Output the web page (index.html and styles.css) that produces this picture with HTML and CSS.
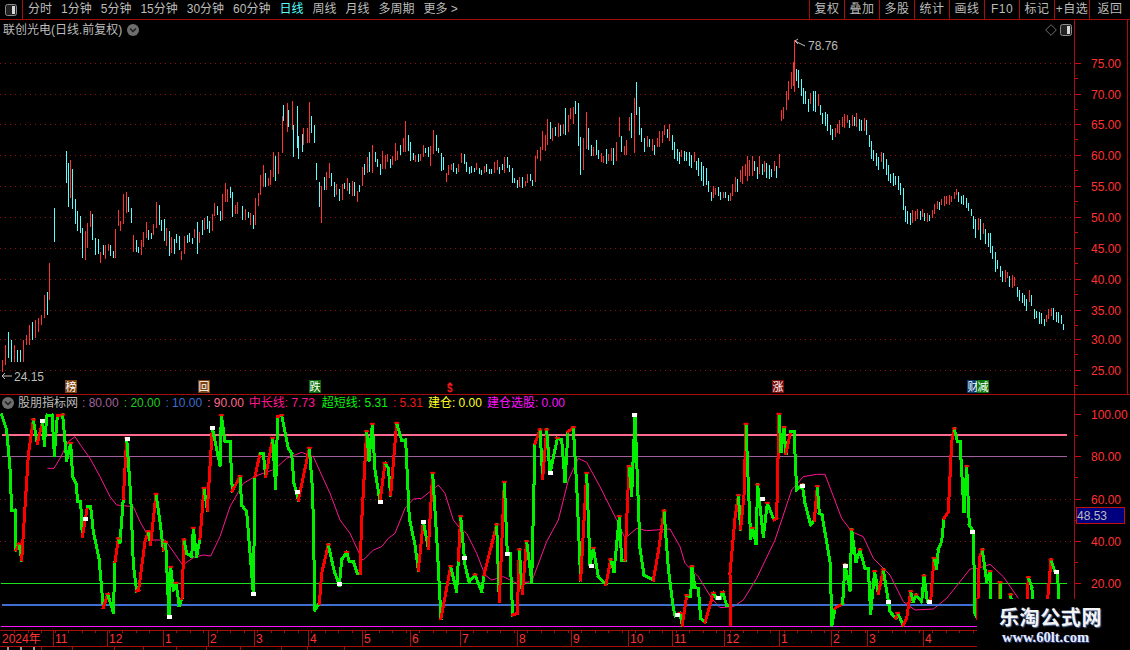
FILE: index.html
```html
<!DOCTYPE html>
<html lang="zh-CN">
<head>
  <meta charset="UTF-8" />
  <title>联创光电</title>
  <link rel="stylesheet" href="styles.css">
</head>
<body>
  <div class="screen">
    <div class="toolbar">
      <div class="layout-btn">
        <svg class="layout-icon" width="12" height="12" viewBox="0 0 12 12"><rect x="0.5" y="0.5" width="11" height="11" rx="2" fill="#222" stroke="#8c8c8c"/><rect x="7" y="2" width="3" height="8" fill="#d8d8d8"/></svg>
      </div>
      <div class="periods">
        <span>分时</span><span>1分钟</span><span>5分钟</span><span>15分钟</span><span>30分钟</span><span>60分钟</span>
        <span class="active">日线</span><span>周线</span><span>月线</span><span>多周期</span><span>更多 &gt;</span>
      </div>
      <div class="tools">
        <span>复权</span><span>叠加</span><span>多股</span><span>统计</span><span>画线</span><span>F10</span><span>标记</span><span>+自选</span><span class="last">返回</span>
      </div>
    </div>

    <div class="pane pane-main">
      <div class="plot">
        <svg id="priceChart" width="1075" height="374" viewBox="0 20 1075 374"></svg>
        <div class="title">
          <span>联创光电(日线.前复权)</span>
          <svg width="12" height="12" viewBox="0 0 12 12"><circle cx="6" cy="6" r="6" fill="#6e6e6e"/><path d="M3 4.5 L6 7.5 L9 4.5" fill="none" stroke="#1c1c1c" stroke-width="1.5"/></svg>
        </div>
        <div class="plot-icons">
          <svg width="12" height="12" viewBox="0 0 12 12"><path d="M6 .7 L11.3 6 L6 11.3 L.7 6 Z" fill="none" stroke="#6e6e6e"/></svg>
          <svg width="12" height="12" viewBox="0 0 12 12"><rect x="0.5" y="0.5" width="11" height="11" rx="2" fill="#222" stroke="#8c8c8c"/><rect x="7" y="2" width="3" height="8" fill="#d8d8d8"/></svg>
        </div>
      </div>
      <svg id="priceAxis" class="axis" width="52" height="374" viewBox="1075 20 52 374"></svg>
      <div class="side-strip"></div>
    </div>

    <div class="pane pane-sub">
      <div class="plot">
        <svg id="indicatorChart" width="1075" height="235" viewBox="0 395 1075 235"></svg>
        <div class="legend">
          <svg width="12" height="12" viewBox="0 0 12 12"><circle cx="6" cy="6" r="6" fill="#6e6e6e"/><path d="M3 4.5 L6 7.5 L9 4.5" fill="none" stroke="#1c1c1c" stroke-width="1.5"/></svg>
          <span class="legend-name">股朋指标网</span>
          <span class="c-purple">: 80.00</span>
          <span class="c-green">: 20.00</span>
          <span class="c-blue">: 10.00</span>
          <span class="c-pink">: 90.00</span>
          <span class="c-rose">中长线: 7.73</span>
          <span class="c-lime">超短线: 5.31</span>
          <span class="c-red">: 5.31</span>
          <span class="c-yellow">建仓: 0.00</span>
          <span class="c-magenta">建仓选股: 0.00</span>
        </div>
      </div>
      <svg id="indicatorAxis" class="axis" width="55" height="235" viewBox="1075 395 55 235"></svg>
    </div>

    <div class="timeline">
      <svg id="timeAxis" width="978" height="15" viewBox="0 631 978 15"></svg>
    </div>

    <div class="tabs">
      <i class="tab t42"></i><i class="tab t31"></i><i class="tab t42"></i><i class="tab t29"></i><i class="tab t33"></i><i class="tab t30"></i><i class="tab t34"></i><i class="tab t41"></i><i class="tab t26"></i><i class="tab t37"></i>
    </div>

    <div class="watermark">
      <div class="wm-name">乐淘公式网</div>
      <div class="wm-url">www.60lt.com</div>
    </div>
  </div>
  <script src="chart.js"></script>
</body>
</html>
```

FILE: styles.css
```css
html, body { margin: 0; padding: 0; background: #000; }
body { font-family: "Liberation Sans", "Noto Sans CJK SC", sans-serif; font-size: 12px; color: #bcbcbc; }
svg { display: block; }
.screen { position: relative; width: 1130px; height: 650px; overflow: hidden; display: flex; flex-direction: column; }

.toolbar { display: flex; height: 19px; border-bottom: 1px solid #a80d0d; line-height: 18px; white-space: nowrap; }
.layout-btn { width: 23px; border-right: 1px solid #a80d0d; display: flex; align-items: center; padding-left: 5px; box-sizing: border-box; }
.periods { display: flex; gap: 9px; padding-left: 5px; flex: 1; }
.periods .active { color: #54ffff; }
.tools { display: flex; }
.tools span { width: 34px; border-left: 1px solid #a80d0d; text-align: center; letter-spacing: 0.5px; }
.tools .last { width: 40px; }

.pane { display: flex; border-bottom: 1px solid #a80d0d; }
.pane-main { height: 374px; }
.pane-sub { height: 235px; }
.plot { position: relative; width: 1075px; flex: none; }
.axis { border-left: 1px solid #a80d0d; margin-left: -1px; flex: none; }
.side-strip { flex: none; width: 3px; border-left: 1px solid #a80d0d; }

.title { position: absolute; left: 3px; top: 1px; display: flex; align-items: center; gap: 5px; line-height: 18px; }
.plot-icons { position: absolute; right: 3px; top: 4px; display: flex; gap: 3px; }
.legend { position: absolute; left: 2px; top: 0; display: flex; align-items: center; line-height: 16px; white-space: nowrap; }
.legend span { margin-right: 5px; }
.legend svg { margin-right: 4px; }
.legend .legend-name { margin-right: 4px; }
.legend .c-rose { margin-right: 7px; }

.c-purple { color: #a0609c; }
.c-green { color: #20cc20; }
.c-blue { color: #3f6fd0; }
.c-pink { color: #ff6b8f; }
.c-rose { color: #ff1493; }
.c-lime { color: #10f010; }
.c-red { color: #f01818; }
.c-yellow { color: #ffff20; }
.c-magenta { color: #ff10ff; }

.timeline { height: 15px; border-bottom: 1px solid #a80d0d; }
#timeAxis { overflow: visible; }
.tabs { display: flex; height: 3px; overflow: hidden; }
.tab { display: block; border-right: 1px solid #a80d0d; box-sizing: border-box; }
.tab:first-child { background: repeating-linear-gradient(90deg, #000 0 7px, #9a9a9a 7px 9px, #000 9px 13px); }
.t26 { width: 26px; }
.t29 { width: 29px; }
.t30 { width: 30px; }
.t31 { width: 31px; }
.t33 { width: 33px; }
.t34 { width: 34px; }
.t37 { width: 37px; }
.t41 { width: 41px; }
.t42 { width: 42px; }

.watermark { position: absolute; left: 977px; top: 599px; width: 153px; height: 51px; background: #000; box-sizing: border-box; padding: 6px 0 0 22px; }
.wm-name { font-family: "Noto Sans CJK SC", sans-serif; font-size: 20px; font-weight: 700; line-height: 24px; letter-spacing: 0.6px; color: #f4f4f4; text-shadow: 1px 1px 1px #5a70a0; white-space: nowrap; }
.wm-url { font-family: "Liberation Serif", serif; font-size: 14.5px; font-weight: 700; line-height: 16px; margin-left: 3px; color: #e6ecff; text-shadow: 1px 1px 1px #3a4c90; white-space: nowrap; }

.axis-text { font-family: "Liberation Sans", "Noto Sans CJK SC", sans-serif; font-size: 12px; fill: #ff3232; }
.price-text { font-family: "Liberation Sans", sans-serif; font-size: 12px; fill: #bcbcbc; }
.tag-text { font-family: "Noto Sans CJK SC", sans-serif; font-size: 11px; fill: #fff; }
.dollar-text { font-family: "Liberation Sans", sans-serif; font-size: 10px; font-weight: 700; fill: #f01818; }
```

FILE: chart.js
```js
var NS = "http://www.w3.org/2000/svg";

function add(svg, name, attrs, text) {
  var node = document.createElementNS(NS, name);
  for (var key in attrs) node.setAttribute(key, attrs[key]);
  if (text) node.textContent = text;
  svg.appendChild(node);
  return node;
}

function hline(svg, x1, x2, y, color, width, dash) {
  var attrs = { x1: x1, x2: x2, y1: y, y2: y, stroke: color, "stroke-width": width || 1, "shape-rendering": "crispEdges" };
  if (dash) attrs["stroke-dasharray"] = dash;
  add(svg, "line", attrs);
}

function vline(svg, x, y1, y2, color, width) {
  add(svg, "line", { x1: x, x2: x, y1: y1, y2: y2, stroke: color, "stroke-width": width || 1, "shape-rendering": "crispEdges" });
}

// bars read off the reference, as "x,top,bottom,colour" relative to a 3x crop
var BARS_LEFT = "163,324,426,c 197,153,249,c 203,190,321,c 211,180,294,r 217,207,327,c 226,297,372,c 232,333,393,c 241,348,399,c 247,384,474,c 256,393,480,r 262,369,444,r 271,333,381,r 277,342,420,c 286,414,465,c 295,417,462,c 301,456,489,r 310,435,465,c 316,435,477,r 325,432,453,r 331,435,468,c 340,453,474,c 346,387,474,r 355,330,378,r 361,363,393,r 370,282,372,r 379,276,339,r 385,291,336,c 394,324,369,c 400,405,456,r 409,420,456,c 415,441,459,c 424,420,465,r 430,396,441,r 439,366,414,r 445,390,420,c 454,399,417,c 460,372,405,r 469,306,384,r 478,315,375,c 484,360,393,c 493,357,423,c 499,384,438,r 508,393,468,c 514,411,459,r 523,417,462,c 529,402,429,c 538,408,450,c 544,453,480,r 553,408,462,r 562,405,429,c 568,399,426,c 577,414,432,c 583,387,414,r 592,366,462,c 598,396,429,r 607,360,405,c 613,354,390,r 622,348,387,c 628,363,399,c 637,342,393,r 643,309,348,r 652,318,345,c 661,333,363,c 667,282,360,r 676,249,306,r 682,267,306,r 691,261,294,c 697,276,351,c 706,315,342,r 712,306,342,r";

var BARS_MIDDLE = "5,408,450,c 15,417,450,r 25,426,444,c 30,429,465,r 40,435,477,c 45,384,465,r 55,369,408,r 60,315,375,r 70,285,352,r 75,309,352,c 85,324,348,r 90,300,345,r 100,246,321,r 105,258,333,c 115,246,312,r 125,138,249,r 130,105,153,c 140,99,186,r 145,120,171,c 155,93,180,r 160,165,261,c 170,108,234,c 175,198,267,c 185,192,246,c 190,174,225,r 200,174,219,r 208,96,219,r 214,138,189,c 223,165,219,c 229,279,330,c 238,336,411,c 244,348,459,r 253,321,360,c 259,306,360,r 268,279,324,r 274,309,348,c 283,336,381,c 289,342,375,r 298,357,393,c 307,342,390,r 313,339,357,c 322,324,363,r 328,339,372,c 337,333,378,r 343,336,378,c 352,363,396,r 358,345,366,c 367,292,348,r 373,282,315,c 382,262,310,r 388,246,305,c 397,225,308,r 406,246,275,c 412,268,290,c 421,282,315,c 427,243,297,r 436,255,297,r 442,252,275,r 451,267,293,c 457,258,285,r 466,218,272,r 472,243,270,r 481,225,255,c 490,204,245,r 496,153,245,r 505,195,243,c 511,216,272,c 520,250,270,c 526,255,275,r 535,252,275,c 541,252,273,r 550,225,260,r 556,233,250,c 565,230,260,c 571,228,288,r 580,180,252,r 589,195,243,c 595,233,248,c 604,250,302,c 610,262,300,c 619,310,335,r 625,285,315,r 634,282,300,r 640,280,305,c 649,293,312,c 655,282,305,r 664,250,278,r 673,252,283,c 679,277,305,c 688,290,312,c 694,288,308,c 703,295,305,c 709,280,300,r 718,295,313,c 724,300,315,c 733,288,310,r 739,283,305,c 748,297,312,c 754,297,312,c 763,277,310,r 772,270,300,r 778,292,312,c 787,282,300,c 793,262,308,r 802,262,295,c 808,285,305,c 817,294,340,c 823,325,340,c 832,330,355,c 838,322,350,r 847,322,353,c 856,332,348,r 862,312,340,r 871,312,332,c 877,330,347,c 886,258,335,r 892,240,268,r 901,232,272,r 907,183,240,r 916,195,243,r 922,148,225,r 931,155,207,c 937,175,212,r 946,170,198,c 955,160,200,r 961,165,197,c 970,162,192,r 976,114,195,c 985,135,185,r 991,114,147,r 1000,110,162,r 1006,93,133,c 1015,98,228,c 1021,200,315,c 1030,205,300,r 1039,126,238,r 1045,175,240,c 1054,225,258,c 1060,232,258,r 1069,210,255,c 1075,240,268,c 1084,250,275,r 1090,258,278,r 1099,237,282,c 1105,252,273,r 1114,235,273,r 1120,235,285,c 1129,215,273,r 1138,142,200,r 1144,198,245,c 1153,228,255,r 1159,210,255,r 1168,140,183,r 1174,128,205,c 1183,83,248,r 1189,37,135,c 1198,110,195,c 1204,175,215,c 1213,205,245,c 1222,198,230,r 1228,208,230,c 1237,208,243,r 1243,225,255,c 1252,205,230,r 1258,183,230,r";

// start of the run and the right half are only known as envelopes: x, top, bottom
var START = [[2,360,372,"r"],[5,345,365,"r"],[8,332,358,"c"],[11,340,362,"c"],[14,345,362,"r"],[17,350,362,"c"],[20,350,362,"c"],[23,340,362,"r"],[26,335,345,"r"],[29,325,345,"r"],[32,322,340,"c"],[35,320,338,"r"],[38,318,332,"r"],[41,315,325,"r"],[44,295,318,"r"],[47,292,315,"c"],[49,263,300,"r"]];

var ENVELOPE = [[660,125,150],[665,118,135],[670,125,150],[675,140,165],[680,150,165],[685,150,165],[690,152,175],[695,152,170],[700,155,185],[705,165,190],[710,185,205],[715,185,200],[720,187,200],[725,190,200],[730,192,205],[735,175,195],[740,165,190],[745,160,185],[748,140,180],[752,155,180],[758,155,180],[763,158,180],[770,160,180],[778,160,180],[781,110,125],[784,95,120],[787,85,115],[790,75,100],[793,62,95],[796,65,90],[799,70,95],[802,85,105],[806,85,110],[810,90,115],[815,85,115],[820,100,120],[825,105,130],[830,120,142],[835,125,140],[840,115,135],[845,110,130],[850,112,128],[855,110,130],[860,112,132],[865,118,135],[870,125,160],[875,150,170],[880,150,170],[885,155,175],[890,165,185],[895,170,190],[900,180,200],[905,190,225],[908,205,230],[912,205,225],[916,208,222],[920,208,222],[925,210,222],[930,212,222],[935,200,215],[940,195,210],[945,192,205],[950,190,205],[955,187,200],[960,187,205],[965,192,210],[970,200,215],[975,215,240],[980,218,245],[985,225,245],[990,230,255],[995,250,275],[1000,262,280],[1005,270,285],[1010,272,288],[1015,275,292],[1020,290,305],[1025,290,318],[1030,290,310],[1035,305,322],[1040,310,328],[1045,315,328],[1050,305,320],[1055,305,322],[1060,312,328],[1064,325,332]];

var COLORS = { r: "#ff3232", c: "#54ffff" };

function cropBars(str, ox, oy) {
  return str.split(" ").map(function(item) {
    var p = item.split(",");
    return [ox + p[0] / 3, oy + p[1] / 3, oy + p[2] / 3, p[3]];
  });
}

function envelopeBars() {
  var bars = [], seed = 17, i = 0, lastMid = 140;
  function rand() {
    seed = (seed * 137 + 71) % 1009;
    return seed / 1009;
  }
  for (var x = 662; x < 1065; x += 2.43) {
    while (ENVELOPE[i + 1][0] < x) i++;
    var a = ENVELOPE[i], b = ENVELOPE[i + 1];
    var t = (x - a[0]) / (b[0] - a[0]);
    var top = a[1] + (b[1] - a[1]) * t;
    var span = a[2] + (b[2] - a[2]) * t - top;
    var h = span * (0.4 + 0.4 * rand());
    var y = top + (span - h) * rand();
    var mid = y + h / 2;
    bars.push([x, y, y + h, mid < lastMid ? "r" : "c"]);
    lastMid = mid;
  }
  return bars;
}

function drawPrice() {
  var svg = document.getElementById("priceChart");
  var axis = document.getElementById("priceAxis");
  var levels = [[75,63],[70,94],[65,124],[60,155],[55,186],[50,217],[45,248],[40,279],[35,310],[30,339],[25,370]];
  levels.forEach(function(l) {
    hline(svg, 0, 1075, l[1], "#8c1212", 1, "1 4");
    hline(axis, 1075, 1081, l[1], "#c01010");
    hline(axis, 1075, 1078, l[1] + 15, "#c01010");
    add(axis, "text", { x: 1091, y: l[1] + 5, "class": "axis-text" }, l[0] + ".00");
  });

  var bars = START.concat(cropBars(BARS_LEFT, 0, 100), cropBars(BARS_MIDDLE, 240, 70), envelopeBars());
  bars.forEach(function(b) {
    vline(svg, Math.round(b[0]) + 0.5, b[1], b[2], COLORS[b[3]]);
  });
  vline(svg, 794.5, 40, 92, "#ff3232");

  // high and low marks
  add(svg, "path", { d: "M795 41 L805 46", fill: "none", stroke: "#c0c0c0" });
  add(svg, "path", { d: "M795 41 L798 39 M795 41 L798 44", fill: "none", stroke: "#c0c0c0" });
  add(svg, "text", { x: 808, y: 50, "class": "price-text" }, "78.76");
  add(svg, "path", { d: "M2 376 L12 376 M2 376 L5 373 M2 376 L5 379", fill: "none", stroke: "#c0c0c0" });
  add(svg, "text", { x: 14, y: 381, "class": "price-text" }, "24.15");

  var tags = [[65,"榜","#7b4110"],[198,"回","#7b4110"],[309,"跌","#0a6e0a"],[772,"涨","#7a0a0a"],[967,"财","#0a3a6e"],[977,"减","#0a7a0a"]];
  tags.forEach(function(t) {
    add(svg, "rect", { x: t[0], y: 380, width: 12, height: 13, fill: t[2] });
    add(svg, "text", { x: t[0] + 0.5, y: 391, "class": "tag-text" }, t[1]);
  });
  add(svg, "path", { d: "M450 382 L453 385 L447 385 Z", fill: "#f01818" });
  add(svg, "text", { x: 447, y: 392, "class": "dollar-text" }, "$");
}

// indicator line, "x,y" in 3x crops. A trailing g keeps a rising stretch green
var TRACE_A = "5,30 20,75 30,190 35,315 45,315 48,435 57,418 65,465 72,355 85,150 100,45 112,115 128,48 133,120 141,30g 156,30 163,150 172,32g 188,30 200,165 212,115g 218,215 228,235 233,288 242,290 247,395 256,342 262,305 272,305 280,380 297,460 310,608 323,568 340,622 345,470g 355,402 360,412 370,280g 380,100 392,270 400,480 410,558 416,555 435,410 445,380 452,418 468,268 480,350 490,435 497,412 507,635 512,487g 520,555 528,535g 538,602 546,580g 552,405 560,445 575,455 580,370g 590,455 600,400g 612,250 622,315 637,70 660,180 664,32g 675,110 690,110 697,258 720,215 725,300 740,320 760,567 765,215g 780,145 790,145 797,215 818,100 827,250 833,35g 845,32 865,130 875,145 882,235 895,285 928,130 938,260 945,615 958,595g 965,505 985,420 1003,500 1018,540 1025,465g 1040,442g 1048,470 1060,470 1072,505 1080,505";
var TRACE_B = "0,495 5,350 20,80 27,165 37,58g 45,195 60,290 75,175 85,190 92,270 110,55 125,105 137,105 148,340 165,420 175,495 190,350 205,430 218,205 232,430 243,640 272,485 290,560 295,465g 302,335 315,480 327,530 345,510g 365,560 372,510g 410,360 418,590 433,232 442,445 450,445 458,630 472,625 478,435 487,565 500,410 515,530 525,115g 540,75 548,220 560,75 570,205 592,100g 605,105 615,230 624,80g 640,68 650,240 662,525 680,205 690,480 700,430g 715,515 738,538 752,465 762,500 778,335g 785,465 795,465 807,185 815,270 825,30g 840,430 852,510 880,525 895,440 912,318 925,490 940,610 945,632 960,625g 967,660 980,572 992,575 996,485g 1005,548 1015,550 1022,640 1035,652 1060,565 1070,580 1080,580";
var TRACE_C = "0,580 8,562g 20,600 30,600 32,660 30,505 45,340 55,272 62,372 72,270 78,58 85,240 92,400 98,370g 108,415 113,240g 130,395 142,295g 162,345 170,340 177,28 183,140 192,68g 198,145 212,80 222,80 230,255 247,240g 255,295 272,360 283,345g 292,245 298,325 306,330 330,470 336,660 345,610g 368,595 375,480g 390,555 395,375g 408,470 420,435g 435,490 445,490 452,625 464,500g 475,565 490,495 510,620 527,640 533,625 550,660 560,640 572,560 580,590 588,570g 605,590 612,513g 622,590 632,590 642,460 650,490 655,432g 665,410g 672,340g 685,320 695,110 703,72 712,110 720,110 732,320 740,185g 748,360 760,380 765,625 772,640 778,460 787,435 800,530 810,500g 815,640 835,640 840,533 845,640 870,640 872,570 880,640 918,640 925,518 935,545 945,640 978,640 993,465 1005,500 1012,500 1020,640";

var AVG_A = "142,190 162,190 180,160 205,110 225,95 245,125 270,160 300,215 330,275 350,300 400,305 420,350 440,385 455,405 495,405 520,440 548,480 580,458 610,450 632,453 660,395 690,305 730,235 770,212 825,192 860,160 905,142 940,155 965,210 990,265 1020,345 1050,385 1080,450";
var AVG_B = "0,460 10,465 40,435 65,425 85,400 105,385 135,310 160,282 185,280 235,240 255,265 280,345 300,370 320,385 350,445 375,510 395,525 430,515 470,535 515,530 560,410 595,345 625,225 655,160 680,172 720,245 770,345 795,400 830,370 860,377 930,372 960,425 975,475 1015,515 1055,580 1080,608";
var AVG_C = "0,608 40,605 70,585 110,520 165,405 215,255 250,215 290,208 315,208 365,340 395,380 430,395 460,460 510,510 550,590 585,615 640,612 680,580 720,530 750,492 775,490 810,478 850,515 895,580";

var SQUARES = [[0,"127,48 255,342 380,101 637,68 760,567 508,636 890,260 1018,537"],[360,"60,290 190,350 313,458 442,447 570,204 694,482 821,30 950,630 1073,578"],[720,"125,282 247,242 375,482 505,590 628,590 757,380 1008,500"]];

function cropPoints(str, ox) {
  return str.split(" ").map(function(item) {
    var keep = item.charAt(item.length - 1) === "g";
    var p = item.replace("g", "").split(",");
    return { x: ox + p[0] / 3, y: 405 + p[1] / 3, green: keep };
  });
}

function drawIndicator() {
  var svg = document.getElementById("indicatorChart");
  var axis = document.getElementById("indicatorAxis");

  hline(svg, 0, 1075, 499, "#8c1212", 1, "1 4");
  hline(svg, 0, 1075, 541, "#8c1212", 1, "1 4");
  hline(svg, 2, 1067, 456, "#a0609c");
  hline(svg, 1, 1067, 583, "#1fe01f");

  var avg = cropPoints(AVG_A, 0).concat(cropPoints(AVG_B, 360), cropPoints(AVG_C, 720));
  add(svg, "polyline", {
    points: avg.map(function(p) { return p.x + "," + p.y; }).join(" "),
    fill: "none", stroke: "#ff1493", "stroke-width": 1
  });

  hline(svg, 2, 1067, 435, "#ff6b8f", 2);
  hline(svg, 2, 1067, 605, "#3f6fd0", 2);
  hline(svg, 1, 1067, 626.5, "#ff10ff", 1);

  var trace = cropPoints(TRACE_A, 0).concat(cropPoints(TRACE_B, 360), cropPoints(TRACE_C, 720));
  trace.forEach(function(p, i) {
    if (i === 0) return;
    var prev = trace[i - 1];
    var rising = p.y < prev.y && !p.green;
    add(svg, "line", {
      x1: prev.x, y1: prev.y, x2: p.x, y2: p.y,
      stroke: rising ? "#ff0000" : "#00f000",
      "stroke-width": 3, "stroke-linecap": "square", "shape-rendering": "crispEdges"
    });
  });
  // red cap on every peak
  trace.forEach(function(p, i) {
    if (i === 0 || i === trace.length - 1) return;
    if (p.y < trace[i - 1].y && p.y < trace[i + 1].y && trace[i + 1].x > p.x) {
      add(svg, "rect", { x: p.x - 2.5, y: p.y - 1.5, width: 5, height: 2, fill: "#ff0000" });
    }
  });
  SQUARES.forEach(function(group) {
    cropPoints(group[1], group[0]).forEach(function(p) {
      add(svg, "rect", { x: Math.round(p.x) - 2, y: Math.round(p.y) - 2, width: 5, height: 4, fill: "#fff" });
    });
  });

  [[100,414],[80,456],[60,499],[40,541],[20,583]].forEach(function(l) {
    hline(axis, 1075, 1081, l[1], "#c01010");
    hline(axis, 1075, 1078, l[1] + 21, "#c01010");
    add(axis, "text", { x: 1091, y: l[1] + 5, "class": "axis-text" }, l[0].toFixed(2));
  });
  add(axis, "rect", { x: 1076.5, y: 507.5, width: 48, height: 16, fill: "#00007f", stroke: "#c01010" });
  add(axis, "text", { x: 1077, y: 520, "class": "price-text" }, "48.53");
}

function drawTimeline() {
  var svg = document.getElementById("timeAxis");
  var months = [[53,"11"],[107,"12"],[163,"1"],[208,"2"],[254,"3"],[308,"4"],[362,"5"],[410,"6"],[460,"7"],[517,"8"],[571,"9"],[628,"10"],[672,"11"],[724,"12"],[779,"1"],[831,"2"],[867,"3"],[923,"4"]];
  add(svg, "text", { x: 2, y: 643, "class": "axis-text" }, "2024年");
  for (var x = 14; x < 977; x += 13.5) vline(svg, Math.round(x) + 0.5, 631, 633, "#a80d0d");
  months.forEach(function(m) {
    vline(svg, m[0] + 0.5, 631, 646, "#a80d0d");
    add(svg, "text", { x: m[0] + 2, y: 643, "class": "axis-text" }, m[1]);
  });
  vline(svg, 977.5, 631, 646, "#a80d0d");
}

drawPrice();
drawIndicator();
drawTimeline();
```
